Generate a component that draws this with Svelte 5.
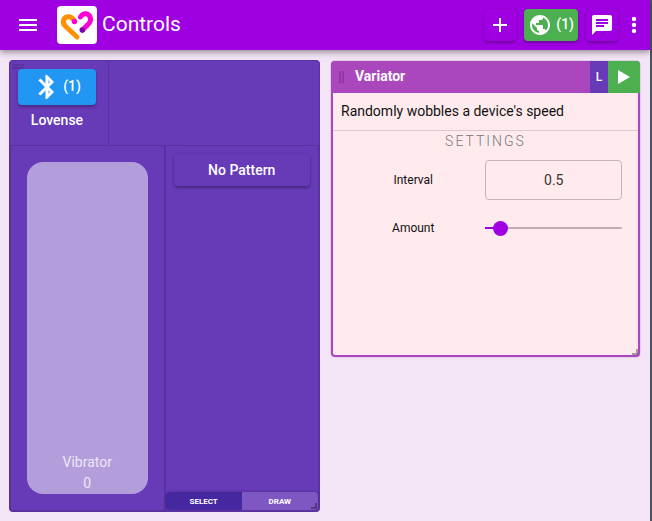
<script>
  let speed = $state(0);
  let interval = $state('0.5');
  let amount = $state(6);
  let mode = $state('select');
</script>

<div class="page">
  <header>
    <button class="plain menu" aria-label="Menu">
      <svg viewBox="0 0 24 24" width="24" height="24"><path d="M3 18h18v-2H3v2zm0-5h18v-2H3v2zm0-7v2h18V6H3z" /></svg>
    </button>
    <svg class="logo" viewBox="0 0 40 38" width="40" height="38">
      <g fill="none" stroke-linecap="round" stroke-linejoin="round" stroke-width="5">
        <path stroke="#ff9100" d="M17 14.500C14.500 10 9.500 9.500 7.200 12.800C5.400 15.800 6.600 18.500 8.500 20.300L20 31" />
        <path stroke="#ff00d4" d="M23.500 11C25.500 7 30.500 6.500 32.600 10C34.500 13.500 33.200 16.200 31.500 18L25.500 24" />
      </g>
      <circle cx="17.500" cy="15.500" r="2.700" fill="#ff00d4" />
      <circle cx="25.300" cy="24" r="2.800" fill="#7b00b0" />
    </svg>
    <h1>Controls</h1>
    <div class="actions">
      <button class="tool" aria-label="Add">
        <svg viewBox="0 0 24 24" width="24" height="24"><path d="M19 13h-6v6h-2v-6H5v-2h6V5h2v6h6v2z" /></svg>
      </button>
      <button class="tool online">
        <svg viewBox="0 0 24 24" width="24" height="24"><path d="M12 2C6.480 2 2 6.480 2 12s4.480 10 10 10 10-4.480 10-10S17.520 2 12 2zm-1 17.930c-3.950-.49-7-3.850-7-7.930 0-.62.08-1.210.21-1.790L9 15v1c0 1.100.9 2 2 2v1.930zm6.900-2.540c-.26-.81-1-1.390-1.900-1.390h-1v-3c0-.55-.45-1-1-1H8v-2h2c.55 0 1-.45 1-1V7h2c1.100 0 2-.9 2-2v-.41c2.930 1.190 5 4.060 5 7.410 0 2.080-.8 3.970-2.100 5.390z" /></svg>
        <span>(1)</span>
      </button>
      <button class="tool" aria-label="Chat">
        <svg viewBox="0 0 24 24" width="24" height="24"><path d="M20 2H4c-1.100 0-1.990.9-1.990 2L2 22l4-4h14c1.100 0 2-.9 2-2V4c0-1.100-.9-2-2-2zM6 9h12v2H6V9zm8 5H6v-2h8v2zm4-6H6V6h12v2z" /></svg>
      </button>
      <button class="plain more" aria-label="More">
        <svg viewBox="0 0 8 24" width="8" height="24"><circle cx="4" cy="6" r="2.200" /><circle cx="4" cy="12" r="2.200" /><circle cx="4" cy="18" r="2.200" /></svg>
      </button>
    </div>
  </header>

  <main>
    <section class="device">
      <div class="top">
        <svg class="grip" viewBox="0 0 12 5" width="12" height="5" aria-hidden="true"><path d="M0 0h12v2H0zM0 3h12v2H0z" /></svg>
        <div class="toy">
          <button class="bluetooth">
            <svg viewBox="0 0 24 24" width="28" height="28"><path stroke="#fff" stroke-width=".6" d="M17.710 7.710L12 2h-1v7.590L6.410 5 5 6.410 10.590 12 5 17.590 6.410 19 11 14.410V22h1l5.710-5.710-4.300-4.290 4.300-4.290zM13 5.830l1.880 1.880L13 9.590V5.830zm1.880 10.460L13 18.170v-3.760l1.880 1.880z" /></svg>
            <span>(1)</span>
          </button>
          <strong>Lovense</strong>
        </div>
      </div>
      <div class="panes">
        <div class="level">
          <label class="track">
            <input type="range" min="0" max="100" bind:value={speed} />
            <span class="caption"><span>Vibrator</span><span>{speed}</span></span>
          </label>
        </div>
        <div class="pattern">
          <button class="pick">No Pattern</button>
          <div class="modes">
            <button class:active={mode === 'select'} onclick={() => (mode = 'select')}>SELECT</button>
            <button class:active={mode === 'draw'} onclick={() => (mode = 'draw')}>DRAW</button>
          </div>
        </div>
      </div>
      <i class="resize"></i>
    </section>

    <section class="variator">
      <div class="bar">
        <svg viewBox="0 0 5 12" width="5" height="12" aria-hidden="true"><path d="M0 0h2v12H0zM3 0h2v12H3z" /></svg>
        <h2>Variator</h2>
        <button class="link">L</button>
        <button class="play" aria-label="Play"><svg viewBox="0 0 12 14" width="12" height="14"><path d="M0 0l12 7-12 7z" /></svg></button>
      </div>
      <p>Randomly wobbles a device's speed</p>
      <h3>SETTINGS</h3>
      <div class="settings">
        <label for="interval">Interval</label>
        <input id="interval" class="box" type="text" inputmode="decimal" bind:value={interval} />
        <label for="amount">Amount</label>
        <input id="amount" class="slider" type="range" min="0" max="100" bind:value={amount} style="--amount: {amount}" />
      </div>
      <i class="resize"></i>
    </section>
  </main>
</div>

<style>
  :global(body) { margin: 0; }
  .page {
    box-sizing: border-box;
    min-height: 100vh;
    display: flex;
    flex-direction: column;
    background: #f3e5f5;
    border-right: 2px solid #4b5660;
    font-family: Roboto, sans-serif;
    font-size: 14px;
    color: #212121;
  }
  button { border: 0; padding: 0; margin: 0; font: inherit; color: #fff; cursor: pointer; }
  svg { display: block; fill: #fff; }
  header {
    display: flex;
    align-items: center;
    height: 50px;
    padding: 0 12px 0 16px;
    background: #9f00e2;
    color: #fff;
    box-shadow: 0 2px 4px -1px rgba(0, 0, 0, .2), 0 4px 5px rgba(0, 0, 0, .14), 0 1px 10px rgba(0, 0, 0, .12);
    z-index: 1;
  }
  .plain { background: none; }
  .logo { margin-left: 17px; background: #fff; border-radius: 4px; }
  h1 { margin: 0 0 2px 5px; font-size: 21px; line-height: 32px; font-weight: 400; }
  .actions { display: flex; align-items: center; gap: 8px; margin-left: auto; }
  .tool {
    display: flex;
    align-items: center;
    gap: 4px;
    height: 32px;
    padding: 0 4px;
    border-radius: 4px;
    background: #9f00e2;
    font-weight: 500;
    box-shadow: 0 2px 3px rgba(0, 0, 0, .25), 0 0 3px rgba(0, 0, 0, .12);
  }
  .tool span, .bluetooth span { margin-bottom: 2px; }
  .online { background: #4caf50; }
  .more { margin-left: 4px; }

  main {
    flex: 1;
    display: grid;
    grid-template-columns: minmax(0, 311fr) minmax(0, 309fr);
    gap: 11px;
    padding: 10px 10px 9px 9px;
  }
  .device {
    position: relative;
    box-sizing: border-box;
    display: flex;
    flex-direction: column;
    border: 1px solid #5a329f;
    border-bottom-width: 2px;
    border-radius: 4px;
    background: #673ab7;
    color: #fff;
    overflow: hidden;
  }
  .top { position: relative; display: flex; border-bottom: 1px solid #5a329f; }
  .grip { position: absolute; top: 3px; left: 2px; fill: #59329e; }
  .toy {
    position: relative;
    display: flex;
    flex-direction: column;
    align-items: center;
    gap: 4px;
    padding: 8px 12px 14px 8px;
    border-right: 1px solid #5a329f;
  }
  .toy strong { font-weight: 500; line-height: 22px; }
  .bluetooth {
    display: flex;
    align-items: center;
    justify-content: center;
    gap: 2px;
    width: 78px;
    height: 36px;
    border-radius: 4px;
    background: #2196f3;
    font-weight: 500;
    box-shadow: 0 2px 3px rgba(0, 0, 0, .3);
  }
  .panes { flex: 1; display: grid; grid-template-columns: 1fr 1fr; }
  .level, .pattern { box-sizing: border-box; display: flex; flex-direction: column; border: 1px solid #5a329f; border-width: 0 1px; }
  .level { padding: 16px; }
  .track {
    position: relative;
    flex: 1;
    display: flex;
    min-height: 200px;
    border-radius: 16px;
    background: #b39ddb;
    overflow: hidden;
  }
  .track input {
    appearance: none;
    position: absolute;
    inset: 0;
    width: 100%;
    height: 100%;
    margin: 0;
    background: none;
    writing-mode: vertical-lr;
    direction: rtl;
  }
  .track input::-webkit-slider-thumb { appearance: none; width: 100%; height: 1px; opacity: 0; }
  .caption {
    position: relative;
    display: flex;
    flex: 1;
    flex-direction: column;
    justify-content: flex-end;
    align-items: center;
    line-height: 21px;
    color: #ede7f6;
    pointer-events: none;
  }
  .pick {
    height: 32px;
    margin: 8px;
    border-radius: 4px;
    background: #673ab7;
    font-weight: 500;
    box-shadow: 0 2px 3px rgba(0, 0, 0, .28), 0 0 3px rgba(0, 0, 0, .14);
  }
  .modes {
    display: flex;
    margin-top: auto;
    border-radius: 4px;
    overflow: hidden;
    box-shadow: 0 0 3px rgba(0, 0, 0, .3);
  }
  .modes button { flex: 1; height: 18px; background: #7e57c2; font-size: 8px; font-weight: 700; }
  .modes .active { background: #4527a0; }
  .resize {
    position: absolute;
    right: 2px;
    bottom: 1px;
    width: 4px;
    height: 4px;
    border: solid rgba(0, 0, 0, .35);
    border-width: 0 2px 2px 0;
  }

  .variator {
    position: relative;
    align-self: start;
    box-sizing: border-box;
    min-height: 296px;
    border: 2px solid #ab47bc;
    border-top: 0;
    border-radius: 4px;
    margin-top: 1px;
    background: #ffebee;
    box-shadow: 0 0 0 1px rgba(0, 0, 0, .08);
  }
  .variator .resize { right: 0; bottom: 0; }
  .bar {
    display: flex;
    align-items: center;
    height: 32px;
    margin: 0 -2px;
    padding-left: 8px;
    border-radius: 4px 4px 0 0;
    background: #ab47bc;
    overflow: hidden;
  }
  .bar > svg { fill: #9038a0; }
  .bar h2 { flex: 1; margin: 0 0 2px 11px; font-size: 14px; line-height: 20px; font-weight: 700; color: #fff; }
  .link { width: 18px; height: 32px; background: #673ab7; font-size: 12px; font-weight: 500; }
  .play { display: flex; align-items: center; justify-content: center; width: 32px; height: 32px; background: #4caf50; }
  p { margin: 0; padding: 8px; line-height: 21px; border-bottom: 1px solid #dccace; color: #111; }
  h3 { margin: 0; font-size: 14px; line-height: 20px; font-weight: 300; letter-spacing: 2px; text-align: center; color: #777; }
  .settings {
    display: grid;
    grid-template-columns: minmax(0, 16fr) minmax(0, 17fr);
    align-items: center;
    row-gap: 16px;
    column-gap: 8px;
    padding: 9px 16px;
  }
  .settings label { font-size: 12px; text-align: center; color: #111; }
  .box {
    box-sizing: border-box;
    width: 100%;
    height: 40px;
    border: 1px solid #c4b4b6;
    border-radius: 4px;
    background: none;
    text-align: center;
    font: 14px Roboto, sans-serif;
    color: #333;
  }
  .slider {
    --fill: calc(8px + (100% - 15px) * var(--amount) / 100);
    appearance: none;
    width: 100%;
    height: 24px;
    margin: 0;
    background: linear-gradient(to right, #9f00e2 var(--fill), #bfaeb1 var(--fill)) center / 100% 2px no-repeat;
  }
  .slider::-webkit-slider-thumb {
    appearance: none;
    width: 15px;
    height: 15px;
    border-radius: 50%;
    background: #9f00e2;
  }
</style>
